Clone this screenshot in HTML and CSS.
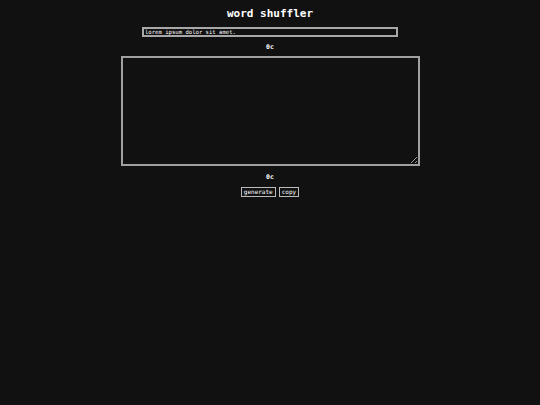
FILE: index.html
```html
<!DOCTYPE html>
<html lang="en">
<head>
<meta charset="utf-8">
<title>word shuffler</title>
<link rel="stylesheet" href="styles.css">
</head>
<body>
<main class="app">
  <h1 class="title">word shuffler</h1>
  <input class="source" type="text" value="lorem ipsum dolor sit amet.">
  <div class="count">0c</div>
  <textarea class="output"></textarea>
  <div class="count">0c</div>
  <div class="actions">
    <button class="btn">generate</button>
    <button class="btn">copy</button>
  </div>
</main>
</body>
</html>
```
FILE: styles.css
```css
html, body {
  margin: 0;
  background: #111111;
  color: #ffffff;
  font-family: "DejaVu Sans Mono", monospace;
}

.app {
  display: flex;
  flex-direction: column;
  align-items: center;
  padding-top: 7px;
}

.title {
  margin: 0;
  font-size: 11px;
  line-height: 14px;
  font-weight: bold;
}

.source {
  margin-top: 6px;
  box-sizing: border-box;
  width: 256px;
  height: 10px;
  padding: 0 1px;
  border: 2px solid #a8a8a8;
  background: #111111;
  color: #ffffff;
  font-family: "DejaVu Sans Mono", monospace;
  font-size: 5.6px;
  outline: none;
}

.count {
  margin-top: 6px;
  font-size: 6.5px;
  line-height: 8px;
  font-weight: bold;
}

.output {
  margin-top: 5px;
  box-sizing: border-box;
  width: 299px;
  height: 110px;
  border: 2px solid #a0a0a0;
  background: #111111;
  color: #ffffff;
  padding: 0;
}

.output + .count {
  margin-top: 7px;
}

.actions {
  display: flex;
  gap: 3px;
  margin-top: 6px;
}

.btn {
  box-sizing: border-box;
  height: 10px;
  padding: 0 2px;
  border: 1px solid #bbbbbb;
  background: #111111;
  color: #ffffff;
  font-family: "DejaVu Sans Mono", monospace;
  font-size: 6px;
  line-height: 8px;
}
```
